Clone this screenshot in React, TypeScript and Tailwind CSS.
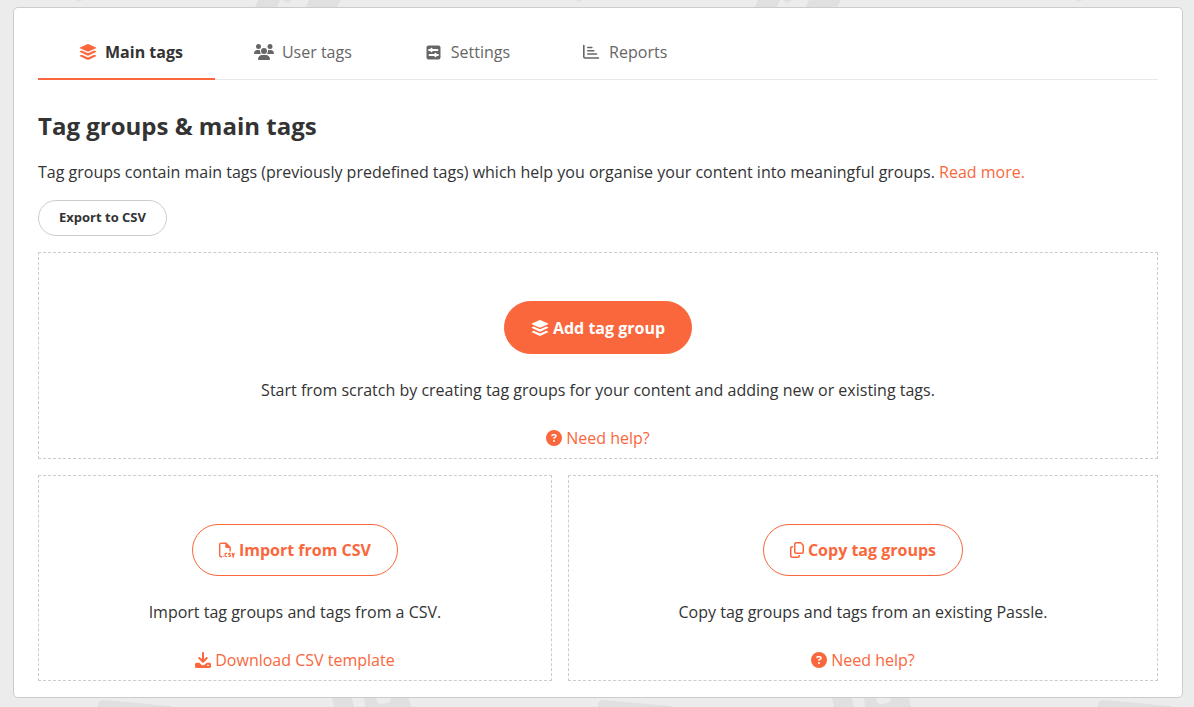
import { useState, type ReactNode } from "react";
import { FaCircleQuestion, FaRegCopy, FaUsers } from "react-icons/fa6";

function LayersIcon() {
  return (
    <svg width="18" height="16" viewBox="0 0 18 16" fill="currentColor" aria-hidden="true">
      <path d="M8.3.2q.7-.3 1.4 0L17 3.4q.8.4 0 .8L9.7 7.4q-.7.3-1.4 0L1 4.2q-.8-.4 0-.8z" />
      <path d="M1 7.3 2.7 6.5 7.8 8.8q1.200.5 2.400 0L15.300 6.500 17 7.300q.8.400 0 .8L9.700 11.500q-.7.300-1.400 0L1 8.100q-.8-.4 0-.8z" />
      <path d="M1 11.500 2.700 10.700 7.800 13q1.200.5 2.400 0L15.300 10.700 17 11.500q.8.400 0 .8L9.700 15.700q-.7.300-1.400 0L1 12.300q-.8-.4 0-.8z" />
    </svg>
  );
}

function SlidersIcon() {
  return (
    <svg width="15" height="15" viewBox="0 0 15 15" aria-hidden="true">
      <rect x=".5" y=".5" width="14" height="14" rx="2" fill="currentColor" />
      <path d="M3 5h8.5M3.500 10H12" stroke="#fff" strokeWidth="1.800" strokeLinecap="round" />
      <path d="M5.500 3.800v2.400M9.500 8.800v2.400" stroke="#fff" strokeWidth="2" strokeLinecap="round" />
    </svg>
  );
}

function ChartIcon() {
  return (
    <svg
      width="17"
      height="16"
      viewBox="0 0 17 16"
      fill="none"
      stroke="currentColor"
      strokeWidth="1.6"
      strokeLinecap="round"
      aria-hidden="true"
    >
      <path d="M.8 1.5v11.250c0 .8.5 1.250 1.250 1.250H15.500" />
      <path d="M4.800 3.500h4M4.800 6.750h6M4.800 10h8.700" />
    </svg>
  );
}

function CsvIcon() {
  return (
    <svg width="16" height="16" viewBox="0 0 17 16" fill="none" stroke="currentColor" aria-hidden="true">
      <path d="M3.5 15.25H2.25C1.4 15.25.75 14.6.75 13.75V2.25C.75 1.4 1.4.75 2.25.75H7.5L11.75 5v4.5" strokeWidth="1.5" />
      <path d="M7.25 1v4.25h4.5z" fill="currentColor" strokeWidth="1" />
      <path
        d="M8.6 11.6H7.2c-.5 0-.7.3-.7.7v1.8c0 .5.2.8.7.8h1.4M12.4 11.6h-1.2c-1.2 0-1.2 1.5 0 1.6s1.2 1.7 0 1.7H10M14 11l1.1 4.2L16.2 11"
        strokeWidth="1.3"
      />
      <path d="M4.5 14.75h.6" strokeWidth="1.3" />
    </svg>
  );
}

function DownloadIcon() {
  return (
    <svg width="16" height="16" viewBox="0 0 16 16" aria-hidden="true">
      <path
        d="M8 1v8.5M4.25 6 8 9.75 11.75 6"
        fill="none"
        stroke="currentColor"
        strokeWidth="2"
        strokeLinecap="round"
        strokeLinejoin="round"
      />
      <path
        d="M1.5 10.75h2.8l2.1 1.9a2.4 2.4 0 0 0 3.2 0l2.1-1.9h2.8c.8 0 1.5.7 1.5 1.5v2.2c0 .8-.7 1.5-1.5 1.5h-13A1.5 1.5 0 0 1 0 14.45v-2.2c0-.8.7-1.5 1.5-1.5zM13 12.6a.8.8 0 1 0 0 1.6.8.8 0 0 0 0-1.6z"
        fill="currentColor"
      />
    </svg>
  );
}

/* Tiled shapes on the page behind the card */
function Backdrop() {
  return (
    <svg className="absolute inset-0 -z-10 h-full w-full" aria-hidden="true">
      <defs>
        <pattern id="backdrop" width="500" height="707" patternUnits="userSpaceOnUse">
          <g fill="#e0e0e0">
            <path d="M77 0h6l-6 2z" />
            <path d="M258 0h22l-3 7h-22zM309 0h32l-4 7h-31zM282 0h10l-4 3z" />
            <path d="M98 707v-3q1-4 5-4l68 6v1zM332 698h20l2 9h-20zM364 698h12l1 4q1 2 4 2l7-1q3-1 3-5h18l2 9h-46z" />
          </g>
        </pattern>
      </defs>
      <rect width="100%" height="100%" fill="url(#backdrop)" />
    </svg>
  );
}

const tabs = [
  { label: "Main tags", icon: <LayersIcon /> },
  { label: "User tags", icon: <FaUsers className="h-4 w-5" /> },
  { label: "Settings", icon: <SlidersIcon /> },
  { label: "Reports", icon: <ChartIcon /> },
];

interface ActionPanelProps {
  action: string;
  actionIcon: ReactNode;
  text: string;
  link: string;
  linkIcon: ReactNode;
  primary?: boolean;
}

function ActionPanel({ action, actionIcon, text, link, linkIcon, primary }: ActionPanelProps) {
  return (
    <section className="flex flex-auto flex-col items-center gap-6 border border-dashed border-[#ccc] px-4 pt-12 pb-2 text-center">
      <button
        type="button"
        className={`flex items-center gap-1 rounded-full border border-[#fa673c] px-[26px] font-bold ${
          primary ? "h-[53px] bg-[#fa673c] text-white" : "h-13 bg-white text-[#fa673c]"
        }`}
      >
        {actionIcon}
        {action}
      </button>
      <p>{text}</p>
      <a href="#" className="flex items-center gap-1 text-[#fa673c]">
        {linkIcon}
        {link}
      </a>
    </section>
  );
}

export default function App() {
  const [active, setActive] = useState("Main tags");

  return (
    <div className="relative isolate min-h-screen bg-[#ececec] pt-[7px] pr-[11px] pb-[9px] pl-[13px] font-['Open_Sans',sans-serif] text-base text-[#333]">
      <Backdrop />
      <main className="rounded-[5px] border border-[#ccc] bg-white px-6 pb-4">
        {/* Tabs */}
        <nav className="flex border-b border-[#e8e8e8] pt-[18px]">
          {tabs.map((tab) => (
            <button
              key={tab.label}
              type="button"
              onClick={() => setActive(tab.label)}
              className={`-mb-px flex h-[54px] items-center border-b-2 px-8 ${
                active === tab.label ? "border-[#fa673c] font-bold" : "border-transparent text-[#666]"
              }`}
            >
              <span className={`flex w-[35px] justify-center ${active === tab.label ? "text-[#fa673c]" : ""}`}>
                {tab.icon}
              </span>
              {tab.label}
            </button>
          ))}
        </nav>

        <h1 className="mt-7 text-2xl leading-9 font-bold">Tag groups &amp; main tags</h1>
        <p className="mt-4">
          Tag groups contain main tags (previously predefined tags) which help you organise your content into
          meaningful groups.{" "}
          <a href="#" className="text-[#fa673c]">
            Read more.
          </a>
        </p>
        <button type="button" className="mt-4 h-9 rounded-full border border-[#ccc] px-5 text-[13px] font-bold">
          Export to CSV
        </button>

        <div className="mt-4 flex flex-col gap-4">
          <ActionPanel
            primary
            action="Add tag group"
            actionIcon={<LayersIcon />}
            text="Start from scratch by creating tag groups for your content and adding new or existing tags."
            link="Need help?"
            linkIcon={<FaCircleQuestion className="size-4" />}
          />
          <div className="flex flex-wrap gap-4">
            <ActionPanel
              action="Import from CSV"
              actionIcon={<CsvIcon />}
              text="Import tag groups and tags from a CSV."
              link="Download CSV template"
              linkIcon={<DownloadIcon />}
            />
            <ActionPanel
              action="Copy tag groups"
              actionIcon={<FaRegCopy className="h-4 w-3.5" />}
              text="Copy tag groups and tags from an existing Passle."
              link="Need help?"
              linkIcon={<FaCircleQuestion className="size-4" />}
            />
          </div>
        </div>
      </main>
    </div>
  );
}
